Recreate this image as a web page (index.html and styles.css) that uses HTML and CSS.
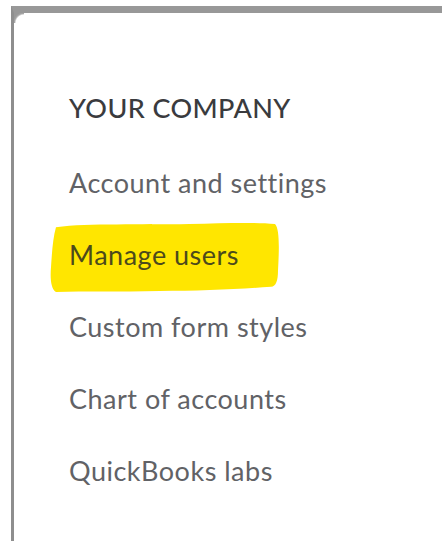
FILE: index.html
```html
<!DOCTYPE html>
<html lang="en">
<head>
<meta charset="utf-8">
<title>Your company</title>
<link rel="stylesheet" href="styles.css">
</head>
<body>
<div class="frame">
  <div class="panel">
    <h2 class="section-title">YOUR COMPANY</h2>
    <ul class="menu">
      <li class="menu-item">Account and settings</li>
      <li class="menu-item menu-item--marked">
        <svg class="marker" viewBox="0 0 232 70" preserveAspectRatio="none" aria-hidden="true">
          <path d="M6 6 C40 2 90 4 140 3 C175 2 205 1 226 3 C231 8 230 30 229 48 C229 58 227 64 222 64 C190 66 150 68 110 68 C70 69 35 68 6 69 C1 66 0 56 1 45 C2 30 3 16 6 6 Z" fill="#ffe600"/>
        </svg>
        <span class="label">Manage users</span>
      </li>
      <li class="menu-item">Custom form styles</li>
      <li class="menu-item">Chart of accounts</li>
      <li class="menu-item">QuickBooks labs</li>
    </ul>
  </div>
</div>
</body>
</html>
```

FILE: styles.css
```css
html, body {
  margin: 0;
  padding: 0;
  background: #ffffff;
}

body {
  width: 442px;
  height: 541px;
  overflow: hidden;
  font-family: Lato, "Open Sans", "Liberation Sans", sans-serif;
}

.frame {
  padding: 6px 0 0 11px;
  height: 545px;
  box-sizing: border-box;
}

/* grey chrome along the top and left edge of the dropdown */
.panel {
  height: 100%;
  background: #ffffff;
  border-top: 7px solid #989898;
  border-left: 3px solid #8e8e8e;
  position: relative;
  padding: 59px 0 0 55px;
  box-sizing: border-box;
}

.panel::before {
  content: "";
  position: absolute;
  left: 0;
  top: 0;
  width: 10px;
  height: 10px;
  background: radial-gradient(circle at 100% 100%, #ffffff 0, #ffffff 8px, #a6a6a6 9.5px, #989898 11px);
}

.section-title {
  margin: 0;
  font-size: 27px;
  font-weight: 500;
  line-height: 72px;
  color: #3a3b3e;
  letter-spacing: 0.4px;
}

.menu {
  list-style: none;
  margin: 3px 0 0;
  padding: 0;
}

.menu-item {
  font-size: 27px;
  font-weight: 400;
  line-height: 72px;
  color: #616266;
  letter-spacing: 0.5px;
  position: relative;
}

.menu-item--marked {
  color: #4c4a1c;
}

/* hand-drawn highlighter stroke behind the selected entry */
.marker {
  position: absolute;
  left: -19px;
  top: 2px;
  width: 231px;
  height: 72px;
  z-index: 0;
}

.label {
  position: relative;
  z-index: 1;
}
```
